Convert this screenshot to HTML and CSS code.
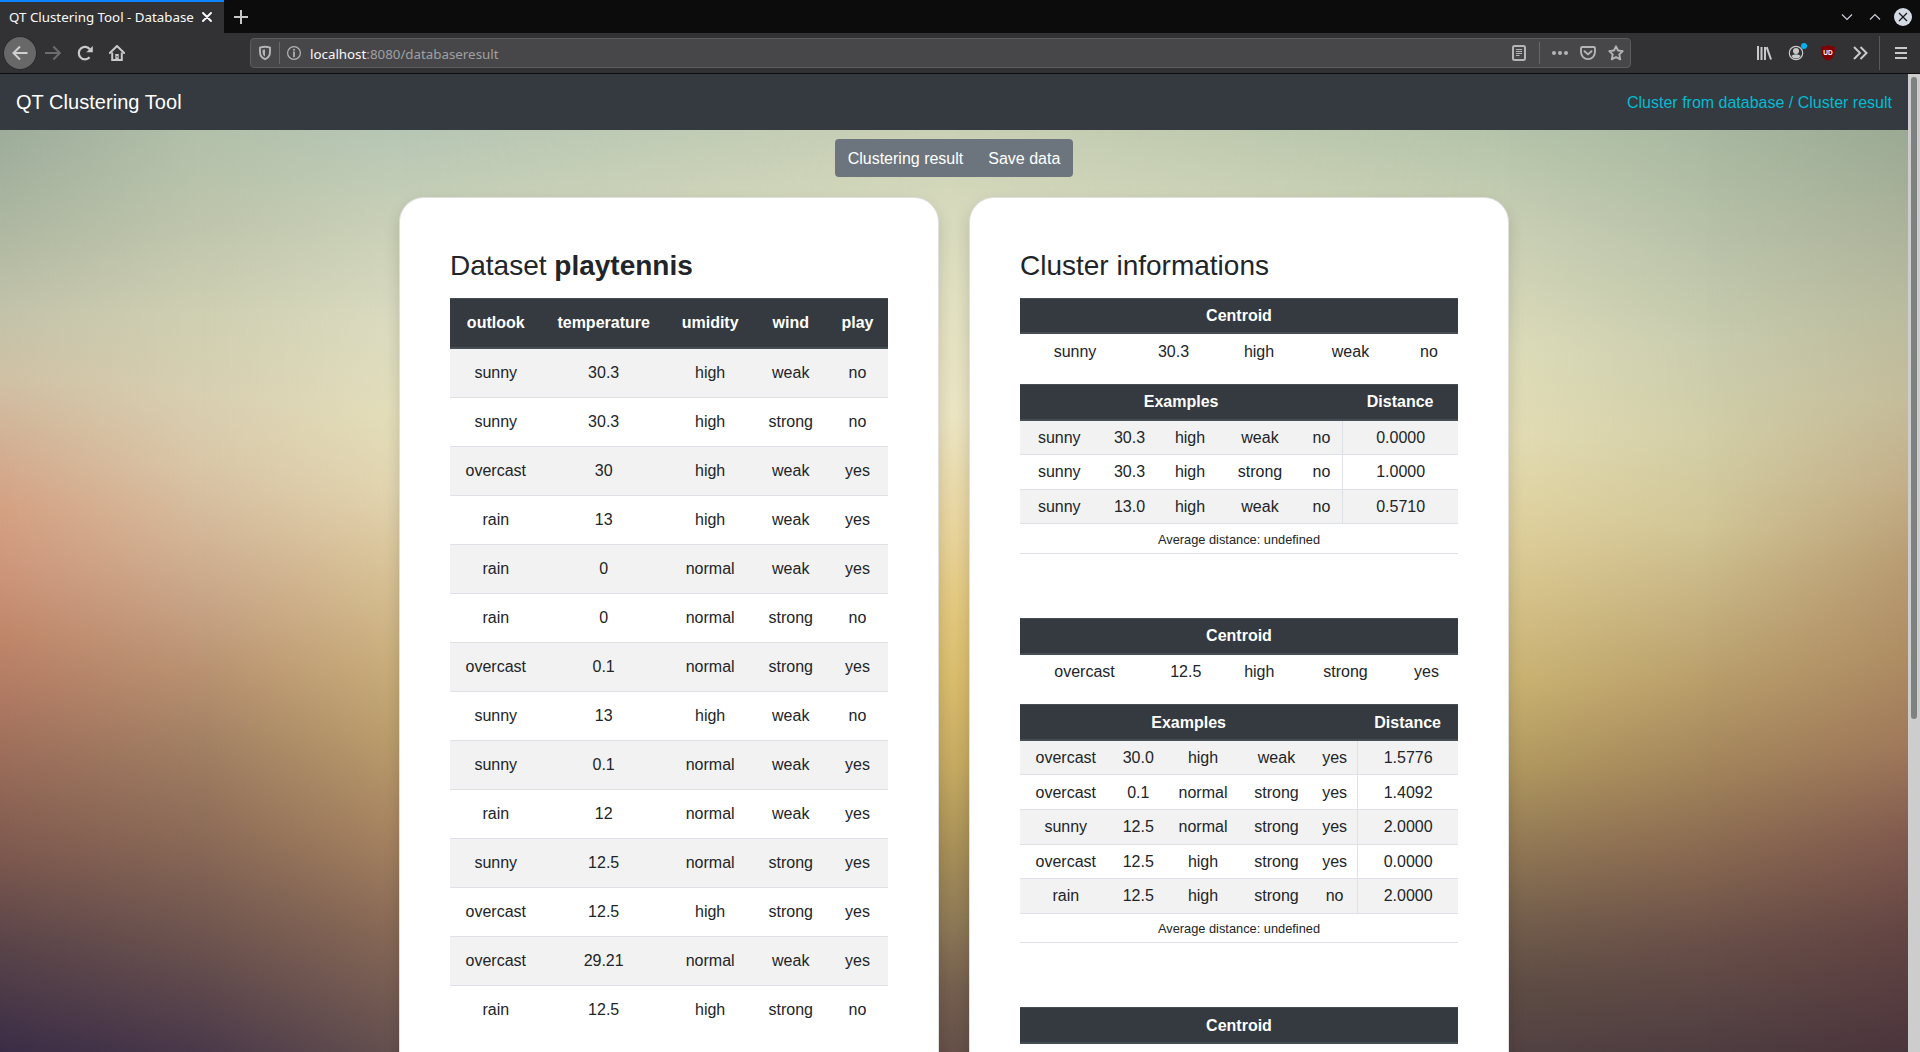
FILE: index.html
```html
<!DOCTYPE html>
<html lang="en">
<head>
<meta charset="utf-8">
<title>QT Clustering Tool - Database</title>
<link rel="stylesheet" href="styles.css">
</head>
<body>
<div class="window">
  <div class="tabstrip">
    <div class="tab">
      <span class="tab-title">QT Clustering Tool - Database</span>
      <svg class="tab-close" width="10" height="10" viewBox="0 0 10 10"><path d="M1 1l8 8M9 1l-8 8" stroke="#f9f9fa" stroke-width="1.9" stroke-linecap="round"/></svg>
    </div>
    <svg class="new-tab" width="14" height="14" viewBox="0 0 14 14"><path d="M7 0v14M0 7h14" stroke="#c8c8cb" stroke-width="2"/></svg>
    <div class="window-controls">
      <svg width="12" height="18" viewBox="0 0 12 18"><path d="M1 6.5l5 5 5-5" fill="none" stroke="#cfd4de" stroke-width="1.1"/></svg>
      <svg width="12" height="18" viewBox="0 0 12 18"><path d="M1 11.500l5-5 5 5" fill="none" stroke="#cfd4de" stroke-width="1.1"/></svg>
      <svg width="18" height="18" viewBox="0 0 18 18"><circle cx="9" cy="9" r="9" fill="#d3dae3"/><path d="M5 5l8 8M13 5l-8 8" stroke="#15171a" stroke-width="1.2"/></svg>
    </div>
  </div>

  <div class="toolbar">
    <span class="tool back"><svg width="16" height="16" viewBox="0 0 16 16"><path d="M15.500 8H1.500M8 1.500L1.500 8 8 14.500" fill="none" stroke="#d0d0d1" stroke-width="2"/></svg></span>
    <span class="tool forward"><svg width="16" height="16" viewBox="0 0 16 16"><path d="M0 8h14.500M8.300 1.500L14.800 8l-6.500 6.500" fill="none" stroke="#6c6c6e" stroke-width="2"/></svg></span>
    <span class="tool"><svg width="16" height="16" viewBox="0 0 16 16"><path d="M12.600 12.300A6.200 6.200 0 1 1 13 4.400" fill="none" stroke="#c9c9ca" stroke-width="2.200"/><path d="M15.800 1v6.300H9.300z" fill="#c9c9ca"/></svg></span>
    <span class="tool"><svg width="16" height="16" viewBox="0 0 16 16"><path d="M.8 8L8 1l7.200 7" fill="none" stroke="#c9c9ca" stroke-width="2" stroke-linecap="round"/><path d="M3.200 7.500V14.900H12.800V7.500" fill="none" stroke="#c9c9ca" stroke-width="2"/><path d="M6.300 9h3.400v6.500H6.300z" fill="#c9c9ca"/><path d="M7.600 11h1v1.500h-1z" fill="#323234"/></svg></span>

    <div class="urlbar">
      <svg class="shield" width="14" height="16" viewBox="0 0 14 16"><path d="M7 1.800c1.500 0 3.500.3 5 .8v4.600c0 3.500-2.200 5.700-5 6.900-2.800-1.200-5-3.400-5-6.900V2.600c1.500-.5 3.500-.8 5-.8z" fill="none" stroke="#b5b5b6" stroke-width="1.900"/><path d="M7 4.500v7c-1.500-.9-2.400-2.100-2.400-4.300V4.800z" fill="#b5b5b6"/></svg>
      <span class="url-divider"></span>
      <svg class="info" width="14" height="14" viewBox="0 0 14 14"><circle cx="7" cy="7" r="6.400" fill="none" stroke="#b5b5b6" stroke-width="1.200"/><circle cx="7" cy="3.800" r="1" fill="#b5b5b6"/><path d="M7 6v4.500" stroke="#b5b5b6" stroke-width="1.700" stroke-linecap="round"/></svg>
      <span class="url"><span class="host">localhost</span>:8080/databaseresult</span>
      <svg class="reader" width="14" height="16" viewBox="0 0 14 16"><rect x="1" y="1" width="12" height="14" rx="1.500" fill="none" stroke="#b5b5b6" stroke-width="2"/><path d="M4 4.500h6M4 6.500h6M4 8.500h6M4 10.500h3.500" stroke="#b5b5b6"/></svg>
      <span class="url-divider action-divider"></span>
      <svg class="dots" width="16" height="16" viewBox="0 0 16 16"><g fill="#b5b5b6"><circle cx="2" cy="8" r="2"/><circle cx="8" cy="8" r="2"/><circle cx="14" cy="8" r="2"/></g></svg>
      <svg class="pocket" width="16" height="16" viewBox="0 0 16 16"><path d="M2.200 2h11.600q1.200 0 1.200 1.200v3.900a7 7 0 0 1-14 0V3.200Q1 2 2.200 2z" fill="none" stroke="#b5b5b6" stroke-width="1.900"/><path d="M4.500 6.200L8 9.400l3.500-3.200" fill="none" stroke="#b5b5b6" stroke-width="1.900" stroke-linecap="round" stroke-linejoin="round"/></svg>
      <svg width="16" height="16" viewBox="0 0 16 16"><path d="M8 1.300l2 4.200 4.700.6-3.400 3.300.9 4.900L8 12l-4.200 2.300.9-4.900L1.300 6.100 6 5.500z" fill="none" stroke="#b5b5b6" stroke-width="1.900" stroke-linejoin="round"/></svg>
    </div>

    <div class="extensions">
      <span class="tool"><svg width="16" height="16" viewBox="0 0 16 16"><path d="M2 1v14M5.500 2v13M9 2v13" stroke="#c9c9ca" stroke-width="2"/><path d="M10.700 2.200L15 14.500" stroke="#c9c9ca" stroke-width="2"/></svg></span>
      <span class="tool account"><svg width="16" height="16" viewBox="0 0 16 16"><circle cx="8" cy="8" r="6.700" fill="none" stroke="#c9c9ca" stroke-width="1.200"/><circle cx="8" cy="6" r="3" fill="#c9c9ca"/><path d="M3.300 11q1.500-1.800 4.700-1.800T12.700 11Q11 13.500 8 13.500T3.300 11z" fill="#c9c9ca"/></svg><i class="badge"></i></span>
      <span class="tool"><svg width="16" height="16" viewBox="0 0 16 16"><path d="M8 0c2 1 4.500 1.600 7 1.700 0 7-1 11-7 14.300C2 12.700 1 8.700 1 1.700 3.500 1.600 6 1 8 0z" fill="#800000"/><text class="shield-label" x="8" y="9.600">UD</text></svg></span>
      <span class="tool"><svg width="16" height="16" viewBox="0 0 16 16"><path d="M2 2l6 6-6 6M8.500 2l6 6-6 6" fill="none" stroke="#c9c9ca" stroke-width="2"/></svg></span>
      <span class="menu-divider"></span>
      <span class="tool"><svg width="16" height="16" viewBox="0 0 16 16"><path d="M2 3h12M2 8h12M2 13h12" stroke="#c9c9ca" stroke-width="2"/></svg></span>
    </div>
  </div>

  <div class="viewport">
    <div class="page">
      <div class="backdrop"><i class="wash w1"></i><i class="wash w2"></i><i class="wash w3"></i><i class="wash w4"></i><i class="wash w5"></i><i class="wash w6"></i><i class="wash w7"></i></div>
      <nav class="navbar"><span class="brand">QT Clustering Tool</span><span class="crumbs">Cluster from database / Cluster result</span></nav>
      <main class="content">
        <div class="btn-group"><span class="btn">Clustering result</span><span class="btn">Save data</span></div>
        <div class="cards">
          <section class="card">
            <h3>Dataset <b>playtennis</b></h3>
            <table class="table striped dataset">
              <colgroup><col style="width:91.500px"><col style="width:124.300px"><col style="width:88.700px"><col style="width:72.500px"><col style="width:61px"></colgroup>
              <thead><tr><th>outlook</th><th>temperature</th><th>umidity</th><th>wind</th><th>play</th></tr></thead>
              <tbody>
                <tr><td>sunny</td><td>30.3</td><td>high</td><td>weak</td><td>no</td></tr>
                <tr><td>sunny</td><td>30.3</td><td>high</td><td>strong</td><td>no</td></tr>
                <tr><td>overcast</td><td>30</td><td>high</td><td>weak</td><td>yes</td></tr>
                <tr><td>rain</td><td>13</td><td>high</td><td>weak</td><td>yes</td></tr>
                <tr><td>rain</td><td>0</td><td>normal</td><td>weak</td><td>yes</td></tr>
                <tr><td>rain</td><td>0</td><td>normal</td><td>strong</td><td>no</td></tr>
                <tr><td>overcast</td><td>0.1</td><td>normal</td><td>strong</td><td>yes</td></tr>
                <tr><td>sunny</td><td>13</td><td>high</td><td>weak</td><td>no</td></tr>
                <tr><td>sunny</td><td>0.1</td><td>normal</td><td>weak</td><td>yes</td></tr>
                <tr><td>rain</td><td>12</td><td>normal</td><td>weak</td><td>yes</td></tr>
                <tr><td>sunny</td><td>12.5</td><td>normal</td><td>strong</td><td>yes</td></tr>
                <tr><td>overcast</td><td>12.5</td><td>high</td><td>strong</td><td>yes</td></tr>
                <tr><td>overcast</td><td>29.21</td><td>normal</td><td>weak</td><td>yes</td></tr>
                <tr><td>rain</td><td>12.5</td><td>high</td><td>strong</td><td>no</td></tr>
              </tbody>
            </table>
          </section>
          <section class="card">
            <h3>Cluster informations</h3>
            <div class="cluster">
              <table class="table small">
                <colgroup><col style="width:110px"><col style="width:87px"><col style="width:84px"><col style="width:99px"><col style="width:58px"></colgroup>
                <thead><tr><th colspan="5">Centroid</th></tr></thead>
                <tbody><tr><td>sunny</td><td>30.3</td><td>high</td><td>weak</td><td>no</td></tr></tbody>
              </table>
              <table class="table small striped examples">
                <colgroup><col style="width:78.500px"><col style="width:62px"><col style="width:59px"><col style="width:81px"><col style="width:41.800px"><col style="width:115.700px"></colgroup>
                <thead><tr><th colspan="5">Examples</th><th>Distance</th></tr></thead>
                <tbody>
                  <tr><td>sunny</td><td>30.3</td><td>high</td><td>weak</td><td>no</td><td class="distance">0.0000</td></tr>
                  <tr><td>sunny</td><td>30.3</td><td>high</td><td>strong</td><td>no</td><td class="distance">1.0000</td></tr>
                  <tr><td>sunny</td><td>13.0</td><td>high</td><td>weak</td><td>no</td><td class="distance">0.5710</td></tr>
                </tbody>
                <tfoot><tr><td colspan="6">Average distance: undefined</td></tr></tfoot>
              </table>
            </div>
            <div class="cluster">
              <table class="table small">
                <colgroup><col style="width:129px"><col style="width:73.500px"><col style="width:73.500px"><col style="width:99px"><col style="width:63px"></colgroup>
                <thead><tr><th colspan="5">Centroid</th></tr></thead>
                <tbody><tr><td>overcast</td><td>12.5</td><td>high</td><td>strong</td><td>yes</td></tr></tbody>
              </table>
              <table class="table small striped examples">
                <colgroup><col style="width:91.500px"><col style="width:53.500px"><col style="width:76px"><col style="width:71px"><col style="width:45.200px"><col style="width:100.800px"></colgroup>
                <thead><tr><th colspan="5">Examples</th><th>Distance</th></tr></thead>
                <tbody>
                  <tr><td>overcast</td><td>30.0</td><td>high</td><td>weak</td><td>yes</td><td class="distance">1.5776</td></tr>
                  <tr><td>overcast</td><td>0.1</td><td>normal</td><td>strong</td><td>yes</td><td class="distance">1.4092</td></tr>
                  <tr><td>sunny</td><td>12.5</td><td>normal</td><td>strong</td><td>yes</td><td class="distance">2.0000</td></tr>
                  <tr><td>overcast</td><td>12.5</td><td>high</td><td>strong</td><td>yes</td><td class="distance">0.0000</td></tr>
                  <tr><td>rain</td><td>12.5</td><td>high</td><td>strong</td><td>no</td><td class="distance">2.0000</td></tr>
                </tbody>
                <tfoot><tr><td colspan="6">Average distance: undefined</td></tr></tfoot>
              </table>
            </div>
            <div class="cluster">
              <table class="table small"><thead><tr><th>Centroid</th></tr></thead></table>
            </div>
          </section>
        </div>
      </main>
    </div>
    <div class="scrollbar"><div class="thumb"></div></div>
  </div>
</div>
</body>
</html>
```
FILE: styles.css
```css
* { box-sizing: border-box; }
body { margin: 0; background: #323234; font-family: "Liberation Sans", Arial, sans-serif; font-size: 16px; line-height: 1.5; color: #212529; }
.window { display: flex; flex-direction: column; width: 1920px; height: 1052px; overflow: hidden; }
svg { display: block; flex: none; }

/* browser chrome */
.tabstrip { display: flex; align-items: center; height: 33px; background: #0c0c0d; font-family: "Noto Sans", sans-serif; font-size: 13.333px; }
.tab { display: flex; align-items: center; justify-content: space-between; width: 224px; height: 33px; padding: 0 12px 0 9px; border-top: 2px solid #0a84ff; background: #323234; color: #f9f9fa; }
.tab-title { white-space: nowrap; }
.tab-close { margin-bottom: 1px; }
.new-tab { margin-left: 10px; }
.window-controls { display: flex; gap: 16px; margin-left: auto; padding: 1px 8px 0 0; }
.window-controls svg:last-child { margin-left: -3px; }
.toolbar { display: flex; align-items: center; height: 41px; padding: 0 3px 0 4px; background: #323234; border-bottom: 1px solid #0c0c0d; }
.tool { display: flex; align-items: center; justify-content: center; width: 32px; height: 32px; flex: none; }
.back { border-radius: 50%; background: #686869; box-shadow: 0 0 0 .5px #232325; }
.forward { margin-left: 1px; }
.urlbar { display: flex; align-items: center; width: 1381px; height: 30px; margin-left: 117px; padding: 0 6px 0 7px; border: 1px solid #5c5c5e; border-radius: 4px; background: #474749; font-family: "Noto Sans", sans-serif; font-size: 13.333px; color: #a0a0a2; }
.url-divider { width: 1px; height: 22px; margin: 0 7px; background: #68686c; }
.host { color: #f9f9fa; }
.url { margin: 3px auto 0 9px; white-space: nowrap; }
.action-divider { margin: 0 12px 0 13px; }
.pocket { margin: 0 12px; }
.extensions { display: flex; align-items: center; margin-left: auto; }
.account { position: relative; }
.badge { position: absolute; right: 5px; top: 6px; width: 6px; height: 6px; border-radius: 50%; background: #00b3f4; }
.shield-label { font: bold 6.500px "Liberation Sans", sans-serif; fill: #fff; text-anchor: middle; }
.menu-divider { width: 1px; height: 34px; margin: 0 5px 0 3px; background: #58585a; }

/* page */
.viewport { display: flex; height: 978px; }
.page { position: relative; z-index: 0; display: flex; flex-direction: column; width: 1908px; overflow: hidden; }
.scrollbar { width: 12px; padding: 3px 3px; background: #cdcdcd; }
.thumb { height: 642px; border-radius: 3px; background: #7d8281; }
.navbar { display: flex; flex: none; align-items: center; justify-content: space-between; height: 56px; padding: 0 16px; background: #343a40; }
.brand { font-size: 20px; letter-spacing: .04px; color: #fff; }
.crumbs { padding-top: 1px; color: #00bcd4; }
.content { display: flex; flex-direction: column; align-items: center; flex: 1; min-height: 0; padding-top: 9px; }
.btn-group { display: flex; flex: none; height: 38px; border-radius: 4px; background: #6c757d; color: #fff; }
.btn { padding: 8px 13px 6px; white-space: nowrap; }
.btn + .btn { margin-left: -1px; }
.cards { display: flex; gap: 30px; margin-top: 20px; flex: none; }
.card { width: 540px; height: 1000px; padding: 51px 50px 0; border: 1px solid #dfdfdf; border-radius: 25px; background: #fff; box-shadow: 0 8px 16px rgba(0,0,0,.15); }
h3 { margin: 0 0 15.200px; font-size: 28px; font-weight: 400; line-height: 33.600px; }

.table { width: 100%; margin-bottom: 16px; border-collapse: separate; border-spacing: 0; table-layout: fixed; text-align: center; }
.table th { padding: 12px 0; border-top: 1px solid #454d55; border-bottom: 2px solid #454d55; background: #343a40; color: #fff; }
.table td { padding: 12px 0; }
.table tbody tr + tr td, .table tfoot td { border-top: 1px solid #dee2e6; }
.striped tbody tr:nth-child(odd) td { background: #f2f2f2; }
.small th, .small td { padding: 5.400px 0 4.200px; }
.small .distance { border-left: 1px solid #dee2e6; }
.table tfoot td { border-bottom: 1px solid #dee2e6; font-size: 12.800px; line-height: 19.200px; }
.cluster { padding-bottom: 48px; }

/* blurred landscape: vertical colour washes blended left to right */
.backdrop { position: absolute; z-index: -1; inset: 56px 0 0; }
.wash { position: absolute; inset: 0; }
.w1 { background: linear-gradient(#9dac9a 0%, #adb7a1 10%, #c3c3aa 20%, #d0c1a5 27%, #d3b094 34%, #d5a183 41%, #cd957a 48%, #c0866a 55%, #ae7862 62%, #966a58 70%, #7c584e 79%, #5b454a 88%, #3b2d47 100%); }
.w2 { background: linear-gradient(#b2c0aa 0%, #bec5ac 10%, #cfcfb2 20%, #d8cfb1 29%, #d9c7a8 36%, #d3b697 44%, #c6a284 52%, #b89170 59%, #a17f63 67%, #8b6a57 77%, #6f554f 87%, #4a394a 100%); -webkit-mask-image: linear-gradient(90deg, transparent 0%, #000 10.500%); mask-image: linear-gradient(90deg, transparent 0%, #000 10.500%); }
.w3 { background: linear-gradient(#b6c6b4 0%, #c9d0b7 10%, #dbdbc0 21%, #e3deba 31%, #e2d5b0 39%, #d8c296 48%, #cbb07e 57%, #bb9e6c 66%, #a88561 76%, #886956 87%, #65504f 100%); -webkit-mask-image: linear-gradient(90deg, transparent 10.500%, #000 20.900%); mask-image: linear-gradient(90deg, transparent 10.500%, #000 20.900%); }
.w4 { background: linear-gradient(#c9d0b5 0%, #d6d9bc 8%, #e1e0c1 18%, #ebe5c3 31%, #eadcb0 37%, #e8d39a 44%, #e2c77d 52%, #d9bc6c 60%, #c6aa62 69%, #ab9359 77%, #8e7956 86%, #75604f 93%, #665049 100%); -webkit-mask-image: linear-gradient(90deg, transparent 20.900%, #000 50%); mask-image: linear-gradient(90deg, transparent 20.900%, #000 50%); }
.w5 { background: linear-gradient(#b3c3a9 0%, #cbd0b5 12%, #dddcb9 24%, #e3dcb4 33%, #e0d29f 42%, #d6c289 51%, #c9b271 60%, #b1995f 69%, #927855 78%, #735e4c 86%, #5e4c44 93%, #534243 100%); -webkit-mask-image: linear-gradient(90deg, transparent 50%, #000 79.100%); mask-image: linear-gradient(90deg, transparent 50%, #000 79.100%); }
.w6 { background: linear-gradient(#a8b8a0 0%, #b7c1a8 11%, #c9ccae 23%, #d2cea7 33%, #d1c596 43%, #c6b281 51%, #b89d6a 60%, #a3855b 69%, #876750 79%, #694f48 88%, #4e3d41 100%); -webkit-mask-image: linear-gradient(90deg, transparent 79.100%, #000 89.500%); mask-image: linear-gradient(90deg, transparent 79.100%, #000 89.500%); }
.w7 { background: linear-gradient(#9aa993 0%, #a9b199 9%, #babb9e 20%, #c4bc9a 29%, #c3af89 38%, #b89b72 47%, #ae8c63 57%, #9f785a 67%, #80594e 77%, #634543 87%, #4b353c 100%); -webkit-mask-image: linear-gradient(90deg, transparent 89.500%, #000 100%); mask-image: linear-gradient(90deg, transparent 89.500%, #000 100%); }
```
